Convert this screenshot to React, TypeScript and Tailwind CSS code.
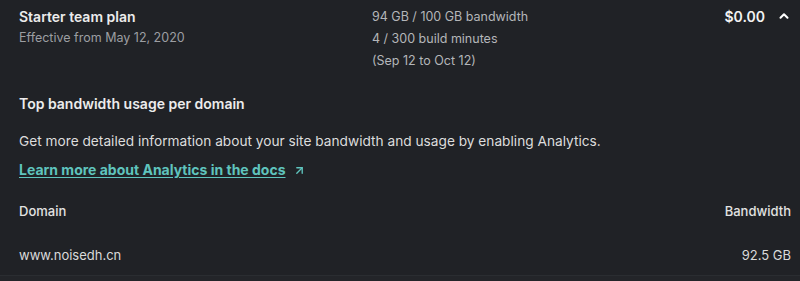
import { ChevronUp, ArrowUpRight } from 'lucide-react';

const domains = [{ name: 'www.noisedh.cn', usage: '92.5 GB' }];

export default function App() {
  return (
    <div className="w-[800px] h-[281px] bg-[#202226] font-['Inter',sans-serif] overflow-hidden">
      <div className="flex pl-[19px] pr-[9px] pt-[6px]">
        <div className="w-[353px]">
          <div className="text-[14px] leading-[21px] font-semibold text-[#ececec]">Starter team plan</div>
          <div className="text-[12.5px] leading-[21px] text-[#9c9ea2]">Effective from May 12, 2020</div>
        </div>
        <div className="flex-1 text-[12.5px] leading-[22px] text-[#b4b6b9]">
          <div>94 GB / 100 GB bandwidth</div>
          <div>4 / 300 build minutes</div>
          <div>(Sep 12 to Oct 12)</div>
        </div>
        <div className="flex items-start gap-[12px]">
          <span className="text-[14px] leading-[21px] font-semibold text-[#f2f2f2]">$0.00</span>
          <ChevronUp className="w-[14px] h-[14px] mt-[3px] text-white" strokeWidth={3.5} />
        </div>
      </div>

      <div className="px-[19px] pt-[22px]">
        <h3 className="text-[14px] leading-[20px] font-semibold text-[#ececec]">Top bandwidth usage per domain</h3>
        <p className="mt-[17px] text-[13.7px] leading-[20px] text-[#dddddd]">
          Get more detailed information about your site bandwidth and usage by enabling Analytics.
        </p>
        <a className="mt-[9px] inline-flex items-center gap-[7px] text-[14px] leading-[20px] font-bold text-[#5fc4bd]">
          <span className="underline underline-offset-2">Learn more about Analytics in the docs</span>
          <ArrowUpRight className="w-[13px] h-[13px]" strokeWidth={2.5} />
        </a>
      </div>

      <div className="mt-[20px] pl-[19px] pr-[9px] flex justify-between text-[13px] leading-[20px] font-medium text-[#e2e2e2]">
        <span>Domain</span>
        <span>Bandwidth</span>
      </div>
      {domains.map((d) => (
        <div
          key={d.name}
          className="mt-[24px] pl-[19px] pr-[9px] pb-[10px] flex justify-between text-[13px] leading-[20px] text-[#dadada] border-b border-[#2a2d31]"
        >
          <span>{d.name}</span>
          <span>{d.usage}</span>
        </div>
      ))}
      <div className="h-[10px] bg-[#232529]" />
    </div>
  );
}
